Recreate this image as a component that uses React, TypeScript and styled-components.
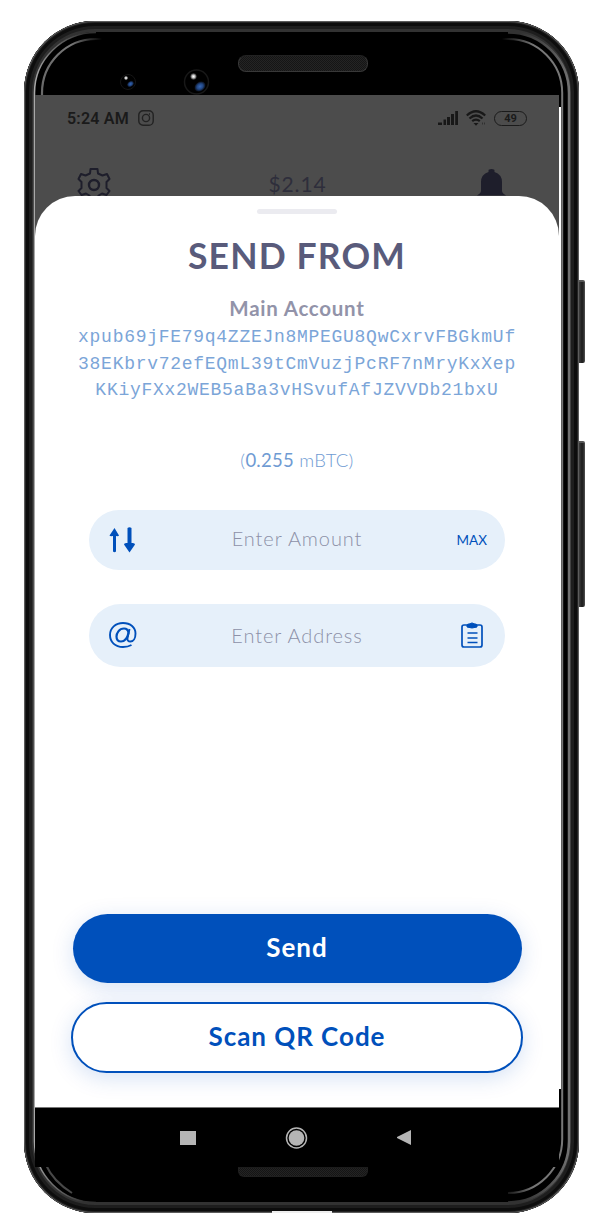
import React from "react";
import styled, { createGlobalStyle } from "styled-components";

const blue = "#0050bb";

const GlobalStyle = createGlobalStyle`
  * { box-sizing: border-box; }
  body { margin: 0; background: #fff; font-family: Lato, "Open Sans", sans-serif; overflow: hidden; }
  input, button { font-family: inherit; }
`;

const Page = styled.main`
  width: 596px;
  height: 1224px;
  padding: 21px 0 0 24px;
  overflow: hidden;
`;

const Device = styled.div`
  position: relative;
  display: flex;
  flex-direction: column;
  width: 555px;
  height: 1192px;
  padding-left: 11px;
  border-radius: 71px;
  background: #000;
  box-shadow: inset 0 0 0 1px #5c5c5c, inset 0 0 0 2px #242424, inset 0 0 0 5px #0d0d0d, inset 0 0 0 8px #1e1e1e, inset 0 0 0 11px #323232;
`;

const SideKey = styled.div<{ $top: number; $height: number }>`
  position: absolute;
  left: 555px;
  top: ${(p) => p.$top}px;
  width: 6px;
  height: ${(p) => p.$height}px;
  border-radius: 0 2px 2px 0;
  border-top: 2px solid #555;
  background: linear-gradient(90deg, #3a3a3a 0 1px, #222 2px 4px, #555);
`;

const FrameLines = styled.svg`
  position: absolute;
  left: 0;
  top: 0;
  pointer-events: none;
`;

const TopBezel = styled.div`
  display: flex;
  justify-content: center;
  width: 536px;
  height: 74px;
  padding-top: 34px;
`;

const Speaker = styled.div<{ $bottom?: boolean }>`
  width: 130px;
  height: ${(p) => (p.$bottom ? 10 : 17)}px;
  border: 1px solid ${(p) => (p.$bottom ? "#202020" : "#383838")};
  border-top-color: ${(p) => (p.$bottom ? "#1c1c1c" : "#222")};
  border-radius: ${(p) => (p.$bottom ? "0 0 6px 6px" : "8px")};
  background: repeating-conic-gradient(#151515 0 25%, #242424 0 50%) 0 0 / 2px 2px;
`;

const ScreenRow = styled.div`
  position: relative;
  display: flex;
  height: 1072px;
`;

const Screen = styled.div`
  display: flex;
  flex-direction: column;
  width: 524px;
  background: #4c4c4c;
`;

const Gap = styled.div`
  width: 2px;
  height: 982px;
  margin-top: 12px;
  background: #fff;
`;

const StatusBar = styled.div`
  display: flex;
  align-items: center;
  height: 46px;
  padding: 0 32px;
  color: #1a1a1a;
  font: 600 16px Roboto, sans-serif;
  letter-spacing: 0.2px;
`;

const StatusIcons = styled.div`
  display: flex;
  align-items: center;
  gap: 8px;
  margin-left: auto;
`;

const TopActions = styled.div`
  display: flex;
  justify-content: space-between;
  height: 55px;
  padding: 26px 51px 0 42px;
  overflow: hidden;
  color: #1e1e2b;
`;

const Fiat = styled.span`
  padding-top: 4px;
  margin-left: 10px;
  font-size: 21px;
  line-height: 26px;
  letter-spacing: 0.9px;
  color: #2e2e3b;
`;

const Sheet = styled.section`
  display: flex;
  flex-direction: column;
  align-items: center;
  height: 911px;
  padding-top: 13px;
  border-radius: 40px 40px 0 0;
  background: #fff;
`;

const Handle = styled.div`
  width: 80px;
  height: 5px;
  flex: none;
  border-radius: 3px;
  background: #ebebf0;
`;

const Title = styled.h1`
  margin: 20px 0 0;
  font-size: 35.5px;
  line-height: 44px;
  font-weight: 700;
  letter-spacing: 1.15px;
  color: #595b7b;
`;

const AccountName = styled.h2`
  margin: 18px 0 0;
  font-size: 20.500px;
  line-height: 24px;
  font-weight: 700;
  letter-spacing: 0.75px;
  color: #9293a9;
`;

const PublicKey = styled.div`
  height: 80px;
  margin-top: 4px;
  text-align: center;
  font: 18px/26.5px "Liberation Mono", monospace;
  letter-spacing: 0.72px;
  color: #7ba5d8;
`;

const Balance = styled.div`
  margin-top: 44px;
  font-size: 18.5px;
  line-height: 24px;
  font-weight: 300;
  color: #6f9bd3;
  letter-spacing: 0.25px;
`;

const Field = styled.label<{ $height: number; $gap: number }>`
  display: flex;
  align-items: center;
  width: 416px;
  height: ${(p) => p.$height}px;
  margin-top: ${(p) => p.$gap}px;
  padding: 0 18px;
  border-radius: 32px;
  background: #e6f0fa;
  color: ${blue};
`;

const Slot = styled.span<{ $end?: boolean }>`
  display: flex;
  width: 32px;
  justify-content: ${(p) => (p.$end ? "flex-end" : "flex-start")};
  font-size: 13.5px;
`;

const Entry = styled.input<{ $lift: number }>`
  flex: 1;
  min-width: 0;
  height: 30px;
  margin-bottom: ${(p) => p.$lift}px;
  padding: 0;
  border: 0;
  outline: 0;
  background: transparent;
  text-align: center;
  font-size: 20px;
  font-weight: 300;
  letter-spacing: 0.9px;
  &::placeholder { color: #8d91a8; opacity: 1; }
`;

const Actions = styled.div`
  display: flex;
  flex-direction: column;
  align-items: center;
  gap: 19px;
  margin-top: auto;
  padding-bottom: 34px;
`;

const Action = styled.button<{ $outline?: boolean }>`
  width: ${(p) => (p.$outline ? 452 : 449)}px;
  height: ${(p) => (p.$outline ? 71 : 69)}px;
  padding: 0 0 ${(p) => (p.$outline ? 3 : 4)}px;
  border: ${(p) => (p.$outline ? `2px solid ${blue}` : "0")};
  border-radius: 36px;
  background: ${(p) => (p.$outline ? "#fff" : blue)};
  color: ${(p) => (p.$outline ? blue : "#fff")};
  font-size: 26px;
  font-weight: 700;
  letter-spacing: 0.95px;
  box-shadow: 0 5px 22px rgba(0, 80, 187, 0.17);
`;

const NavBar = styled.nav`
  display: flex;
  align-items: center;
  gap: 89px;
  height: 60px;
  padding-left: 145px;
  border-top: 1px solid #777;
  background: #000;
`;

const BottomBezel = styled.div`
  display: flex;
  justify-content: center;
  width: 536px;
`;

const Lip = styled.div`
  position: absolute;
  left: 248px;
  bottom: 0;
  width: 60px;
  height: 2px;
  background: #eee;
`;

function DeviceLines() {
  return (
    <FrameLines width="555" height="1192" viewBox="0 0 555 1192" fill="none">
      <defs>
        <linearGradient id="fadeLeft" x1="17" x2="78" y1="0" y2="0" gradientUnits="userSpaceOnUse">
          <stop stopColor="#6a6a6a" /><stop offset=".5" stopColor="#777" /><stop offset="1" stopColor="#000" />
        </linearGradient>
        <linearGradient id="fadeRight" x1="540" x2="478" y1="0" y2="0" gradientUnits="userSpaceOnUse">
          <stop stopColor="#777" /><stop offset=".5" stopColor="#777" /><stop offset="1" stopColor="#000" />
        </linearGradient>
        <linearGradient id="outerLeft" x1="10" x2="60" y1="0" y2="0" gradientUnits="userSpaceOnUse">
          <stop stopColor="#aaa" /><stop offset=".3" stopColor="#777" /><stop offset="1" stopColor="#323232" />
        </linearGradient>
        <linearGradient id="outerRight" x1="546" x2="496" y1="0" y2="0" gradientUnits="userSpaceOnUse">
          <stop stopColor="#737373" /><stop offset=".3" stopColor="#585858" /><stop offset="1" stopColor="#323232" />
        </linearGradient>
        <radialGradient id="lens"><stop stopColor="#3767b5" /><stop offset=".55" stopColor="#214581" /><stop offset="1" stopColor="#07090e" /></radialGradient>
        <radialGradient id="glint"><stop stopColor="#fff" /><stop offset=".4" stopColor="#ccc" /><stop offset="1" stopColor="#111" /></radialGradient>
      </defs>
      <path d="M72 11.500A61.500 60.500 0 0 0 10.500 72V1120A61.500 61.500 0 0 0 72 1181.500" stroke="url(#outerLeft)" strokeWidth="1.500" />
      <path d="M18 74V72A54 54 0 0 1 72 18H78" stroke="url(#fadeLeft)" strokeWidth="2.200" />
      <path d="M478 18H484A54 54 0 0 1 538.200 72V1118A54 54 0 0 1 484 1172" stroke="url(#fadeRight)" strokeWidth="2" />
      <path d="M484 11.500A61 60.500 0 0 1 545 72V1120A61 61.500 0 0 1 484 1181.500" stroke="url(#outerRight)" strokeWidth="2.500" />
      <path d="M22 1144Q29 1160 48 1172" stroke="#484848" strokeWidth="2" />
      <circle cx="104" cy="61" r="7.5" stroke="#151515" />
      <ellipse cx="106.5" cy="63" rx="3.7" ry="2.8" transform="rotate(-35 106.5 63)" fill="url(#lens)" />
      <circle cx="102" cy="57" r="2.2" fill="url(#glint)" />
      <circle cx="172.5" cy="61" r="12" stroke="#181818" strokeWidth="1.5" />
      <ellipse cx="176" cy="65.5" rx="6" ry="4.7" transform="rotate(-35 176 65.5)" fill="url(#lens)" />
      <circle cx="169.5" cy="55.5" r="3.4" fill="url(#glint)" />
    </FrameLines>
  );
}

const InstagramMark = () => (
  <svg width="16" height="16" viewBox="0 0 16 16" fill="none" stroke="#222" strokeWidth="1.4" style={{ marginLeft: 9 }}>
    <rect x=".8" y=".8" width="14.4" height="14.4" rx="4.3" /><circle cx="8" cy="8" r="3.6" /><path d="M11 4h1" />
  </svg>
);

const Signal = () => (
  <svg width="20" height="14" viewBox="0 0 20 14" fill="#181818">
    <path d="M0 11.500h4V14H0zM5.500 8.500H8V14H5.500zM9 6H12v8H9zM13 3H16v11h-3zM17.200 0H20v14h-2.800z" />
  </svg>
);

const Wifi = () => (
  <svg width="20" height="16" viewBox="0 0 20 16" fill="none" stroke="#181818" strokeWidth="2.200">
    <path d="M.8 5.500Q10-3 19.200 5.500M3.500 8.500Q10 2.500 16.500 8.500M6.200 11.200Q10 8 13.800 11.200" />
    <path d="M7.500 13h5L10 15.800z" fill="#181818" stroke="none" /><path d="M16 13.500h1M18 13.500h1" stroke="#303030" />
  </svg>
);

const BatteryBody = styled.span`
  display: flex;
  align-items: center;
  justify-content: center;
  width: 33px;
  height: 15px;
  border: 1.5px solid #1b1b1b;
  border-radius: 8px;
  font: 700 11px Roboto, sans-serif;
  letter-spacing: 0;
`;

const Gear = () => (
  <svg width="34" height="34" viewBox="0 0 34 34" fill="none" stroke="currentColor" strokeWidth="2" strokeLinejoin="round">
    <path d="M13.500 2H20.500L21 6.500L25.500 8.500L30 7L32.500 12L29.500 15V21L32.500 24L29.500 28L25 26.500L21.500 28.500L20.500 33H13.500L12.500 28.500L9 26.500L4.500 28L1.500 24L4.500 21V15L1.500 12L4 7L8.500 8.500L13 6.500Z" />
    <circle cx="17" cy="18" r="5" strokeWidth="2.400" />
  </svg>
);

const Bell = () => (
  <svg width="34" height="34" viewBox="0 0 34 34" fill="currentColor">
    <path d="M14.500 4V3.500Q14.500 2 17.500 2T20.500 3.500V5Q28 7.500 28 15V24Q28 26 32 28.500H3Q7 26 7 24V15Q7 7.500 14.500 5Z" />
  </svg>
);

const SwapArrows = () => (
  <svg width="32" height="26" viewBox="0 0 32 26" fill={blue}>
    <path d="M7.500 1L12 8.500Q11.500 9.500 9 9V24.500Q7.500 26 6 24.500V9Q3 9.500 2.500 8.500Z" />
    <path d="M22.500 25.500L28 17.500Q28 15.500 24.500 16V1Q22.500-.5 20.500 1V16Q17 15.500 17 17.500Z" />
  </svg>
);

const AtSign = () => (
  <svg width="32" height="28" viewBox="0 0 32 28" fill="none" stroke={blue} strokeWidth="1.900" style={{ marginLeft: -0.5, marginBottom: 2 }}>
    <path d="M24.500 24Q21 26 16 26C8 26 3 21 3 14S8.500 2 16 2S28.500 6.500 28.500 12.500C28.500 17 26.500 20.500 23.500 20.500Q20 20.500 20.500 17L22.500 8" />
    <path d="M21.500 12Q21 7.500 17 7.500C12 7.500 9.500 12.500 9.500 15.500Q9.500 20.500 14 20.500C18 20.500 20.500 16.500 21.500 12Z" strokeWidth="2.200" />
  </svg>
);

const Clipboard = () => (
  <svg width="24" height="28" viewBox="0 0 24 28" fill="none" stroke={blue} strokeWidth="1.700" style={{ flex: "none", marginRight: 3, marginBottom: 2 }}>
    <rect x="2" y="4" width="20" height="22" rx="2" />
    <path d="M7 6V4Q7 3 10 2.800Q12 1 14 2.800Q17 3 17 4V6Q12 8 7 6Z" fill={blue} strokeWidth="1" />
    <path d="M7.500 12h10M7.500 17h10M7.500 21.500h10" strokeWidth="1.500" />
  </svg>
);

export default function App() {
  return (
    <Page>
      <GlobalStyle />
      <Device>
        <DeviceLines />
        <SideKey $top={259} $height={83} />
        <SideKey $top={420} $height={166} />
        <TopBezel><Speaker /></TopBezel>
        <ScreenRow>
          <Screen>
            <StatusBar>
              5:24 AM <InstagramMark />
              <StatusIcons><Signal /><Wifi /><BatteryBody>49</BatteryBody></StatusIcons>
            </StatusBar>
            <TopActions><Gear /><Fiat>$2.14</Fiat><Bell /></TopActions>
            <Sheet>
              <Handle />
              <Title>SEND FROM</Title>
              <AccountName>Main Account</AccountName>
              <PublicKey>
                xpub69jFE79q4ZZEJn8MPEGU8QwCxrvFBGkmUf<br />
                38EKbrv72efEQmL39tCmVuzjPcRF7nMryKxXep<br />
                KKiyFXx2WEB5aBa3vHSvufAfJZVVDb21bxU
              </PublicKey>
              <Balance>(<b>0.255</b> mBTC)</Balance>
              <Field $height={60} $gap={38}>
                <Slot><SwapArrows /></Slot>
                <Entry $lift={5} placeholder="Enter Amount" />
                <Slot $end>MAX</Slot>
              </Field>
              <Field $height={63} $gap={34}>
                <Slot><AtSign /></Slot>
                <Entry $lift={2} placeholder="Enter Address" />
                <Slot $end><Clipboard /></Slot>
              </Field>
              <Actions>
                <Action>Send</Action>
                <Action $outline>Scan QR Code</Action>
              </Actions>
            </Sheet>
            <NavBar>
              <svg width="16" height="14"><path d="M0 0h16v14H0z" fill="#b5b5b5" /></svg>
              <svg width="23" height="22" viewBox="0 0 23 22"><circle cx="11.500" cy="11" r="10" fill="none" stroke="#b5b5b5" strokeWidth="1.500" /><circle cx="11.500" cy="11" r="7.800" fill="#b5b5b5" /></svg>
              <svg width="14" height="15"><path d="M14 0v15L0 8V7z" fill="#b5b5b5" /></svg>
            </NavBar>
          </Screen>
          <Gap />
        </ScreenRow>
        <BottomBezel><Speaker $bottom /></BottomBezel>
        <Lip />
      </Device>
    </Page>
  );
}
